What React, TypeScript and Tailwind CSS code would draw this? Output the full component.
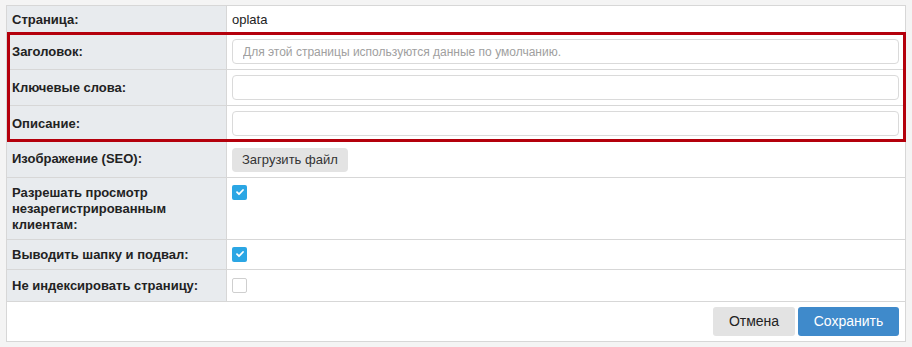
import React from "react";

type RowProps = {
  label: React.ReactNode;
  children?: React.ReactNode;
  pad?: string;
};

const Row = ({ label, children, pad = "py-[6px]" }: RowProps) => (
  <div className="flex border-b border-[#d7d7d7]">
    <div
      className={`w-[220px] shrink-0 border-r border-[#d7d7d7] bg-[#e8ebee] px-[5px] text-[13px] font-bold leading-[16px] text-[#222] ${pad}`}
    >
      {label}
    </div>
    <div className={`flex flex-1 items-start pl-[5px] pr-[6px] ${pad}`}>
      {children}
    </div>
  </div>
);

const InputRow = ({ label, placeholder }: { label: string; placeholder?: string }) => (
  <div className="flex border-b border-[#d7d7d7]">
    <div className="flex w-[220px] shrink-0 items-center border-r border-[#d7d7d7] bg-[#e8ebee] px-[5px] text-[13px] font-bold leading-[16px] text-[#222]">
      {label}
    </div>
    <div className="flex-1 pl-[5px] pr-[6px] py-[5px]">
      <input
        type="text"
        placeholder={placeholder}
        className="h-[25px] w-full rounded-[4px] border border-[#dadada] bg-white px-[10px] text-[13px] text-[#333] outline-none placeholder:text-[12px] placeholder:text-[#a0a0a0]"
      />
    </div>
  </div>
);

const Check = ({ checked }: { checked?: boolean }) =>
  checked ? (
    <span className="flex h-[15px] w-[15px] items-center justify-center rounded-[2px] bg-[#2ba6e4]">
      <svg width="10" height="10" viewBox="0 0 10 10" fill="none">
        <path d="M2 5.2l2 2 4-4.2" stroke="white" strokeWidth="1.8" strokeLinecap="round" strokeLinejoin="round" />
      </svg>
    </span>
  ) : (
    <span className="block h-[15px] w-[15px] rounded-[2px] border border-[#cfcfcf] bg-white" />
  );

export default function App() {
  return (
    <div
      className="min-h-screen bg-[#f4f4f4] px-[6px] pt-[5px] text-[#222]"
      style={{ fontFamily: '"Liberation Sans", Arial, sans-serif' }}
    >
      <div className="w-[900px] border border-[#d7d7d7] bg-white">
        <Row label="Страница:" pad="pt-[6px] pb-[5px]">
          <span className="text-[13px] leading-[16px]">oplata</span>
        </Row>

        <div className="relative">
          <InputRow label="Заголовок:" placeholder="Для этой страницы используются данные по умолчанию." />
          <InputRow label="Ключевые слова:" />
          <InputRow label="Описание:" />
          <div className="pointer-events-none absolute -top-[2px] bottom-0 left-0 -right-[1px] border-[3px] border-[#b4000c]" />
        </div>

        <div className="flex border-b border-[#d7d7d7]">
          <div className="flex w-[220px] shrink-0 items-center border-r border-[#d7d7d7] bg-[#e8ebee] px-[5px] text-[13px] font-bold leading-[16px]">
            Изображение (SEO):
          </div>
          <div className="flex-1 pl-[5px] py-[5px]">
            <button className="h-[24px] rounded-[4px] bg-[#e3e3e3] px-[10px] text-[13px] text-[#333]">
              Загрузить файл
            </button>
          </div>
        </div>

        <Row label={<>Разрешать просмотр<br />незарегистрированным<br />клиентам:</>} pad="pt-[7px] pb-[6px]">
          <Check checked />
        </Row>
        <Row label="Выводить шапку и подвал:" pad="pt-[7px] pb-[6px]">
          <Check checked />
        </Row>
        <Row label="Не индексировать страницу:" pad="pt-[8px] pb-[7px]">
          <Check />
        </Row>

        <div className="flex justify-end gap-[3px] px-[6px] py-[5px]">
          <button className="h-[29px] w-[82px] rounded-[3px] bg-[#e3e3e3] text-[14px] text-[#222]">
            Отмена
          </button>
          <button className="h-[29px] w-[101px] rounded-[3px] bg-[#3f8acb] text-[14px] text-white">
            Сохранить
          </button>
        </div>
      </div>
    </div>
  );
}
